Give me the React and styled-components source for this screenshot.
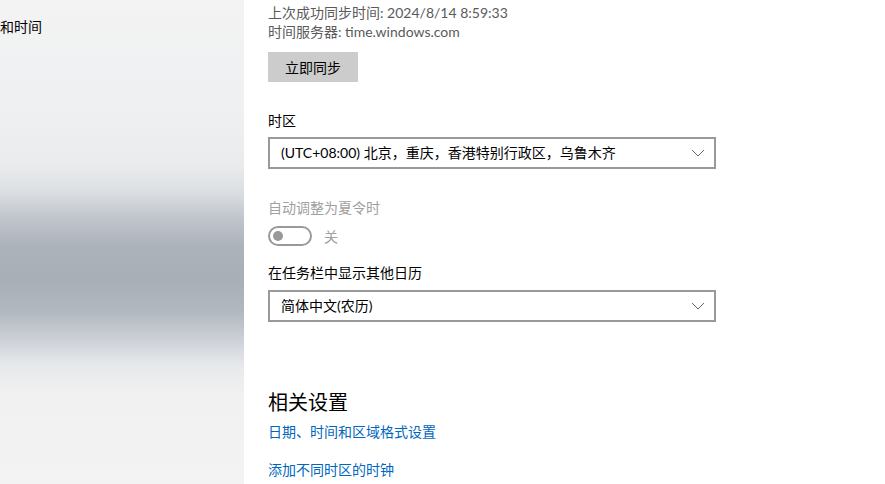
import React from 'react';
import styled, { createGlobalStyle } from 'styled-components';

const GlobalStyle = createGlobalStyle`
  html, body {
    margin: 0;
    padding: 0;
    background: #fff;
  }
  body {
    font-family: "Segoe UI", Lato, "Noto Sans CJK SC", sans-serif;
    font-size: 14px;
    color: #000;
  }
`;

const Page = styled.div`
  display: flex;
  width: 885px;
  height: 484px;
  overflow: hidden;
`;

const Sidebar = styled.aside`
  flex: 0 0 244px;
  overflow: hidden;
  background: linear-gradient(
    180deg,
    #f3f3f3 0px,
    #eef0f1 110px,
    #e9ebec 165px,
    #dcdfe2 192px,
    #c3c8ce 215px,
    #adb3bb 245px,
    #a8afb7 280px,
    #b2b8c0 312px,
    #cdd1d7 340px,
    #e6e8eb 365px,
    #f1f1f1 395px,
    #f3f3f3 484px
  );
`;

const SidebarTitle = styled.div`
  margin-top: 17px;
  line-height: 20px;
  font-size: 14px;
  white-space: nowrap;
`;

const Main = styled.main`
  flex: 1;
  padding: 3px 0 0 24px;
  display: flex;
  flex-direction: column;
  align-items: flex-start;
`;

const InfoLine = styled.div`
  line-height: 19px;
  color: #5a5a5a;
`;

const Button = styled.button`
  margin-top: 11px;
  width: 90px;
  height: 30px;
  border: none;
  background: #cccccc;
  font: inherit;
  color: #000;
  padding: 0;
`;

const Label = styled.div`
  margin-top: ${p => p.$gap}px;
  line-height: 19px;
  color: ${p => (p.$disabled ? '#a0a0a0' : '#000')};
`;

const Select = styled.div`
  margin-top: ${p => p.$gap}px;
  box-sizing: border-box;
  width: 448px;
  height: 32px;
  border: 2px solid #999;
  display: flex;
  align-items: center;
  justify-content: space-between;
  padding: 0 9px 0 11px;
`;

const SelectText = styled.span`
  line-height: 20px;
`;

const ToggleRow = styled.div`
  margin-top: 9px;
  display: flex;
  align-items: center;
  gap: 12px;
  color: #a0a0a0;
`;

const Toggle = styled.div`
  box-sizing: border-box;
  width: 44px;
  height: 20px;
  border: 2px solid #999;
  border-radius: 10px;
  display: flex;
  align-items: center;
  padding-left: 3px;

  &::before {
    content: '';
    width: 10px;
    height: 10px;
    border-radius: 50%;
    background: #999;
  }
`;

const Heading = styled.h3`
  margin: 66px 0 0;
  font-size: 20px;
  font-weight: 400;
  line-height: 28px;
`;

const Link = styled.a`
  margin-top: ${p => p.$gap}px;
  line-height: 19px;
  color: #0067c0;
  text-decoration: none;
`;

function Chevron() {
  return (
    <svg width="14" height="8" viewBox="0 0 14 8">
      <path d="M1 1 L7 7 L13 1" fill="none" stroke="#666" strokeWidth="1" />
    </svg>
  );
}

function Dropdown({ value, gap }) {
  return (
    <Select $gap={gap}>
      <SelectText>{value}</SelectText>
      <Chevron />
    </Select>
  );
}

export default function App() {
  return (
    <Page>
      <GlobalStyle />
      <Sidebar>
        <SidebarTitle>和时间</SidebarTitle>
      </Sidebar>
      <Main>
        <InfoLine>上次成功同步时间: 2024/8/14 8:59:33</InfoLine>
        <InfoLine>时间服务器: time.windows.com</InfoLine>
        <Button>立即同步</Button>

        <Label $gap={29}>时区</Label>
        <Dropdown gap={7} value="(UTC+08:00) 北京，重庆，香港特别行政区，乌鲁木齐" />

        <Label $gap={29} $disabled>自动调整为夏令时</Label>
        <ToggleRow>
          <Toggle />
          <span>关</span>
        </ToggleRow>

        <Label $gap={17}>在任务栏中显示其他日历</Label>
        <Dropdown gap={8} value="简体中文(农历)" />

        <Heading>相关设置</Heading>
        <Link href="#" $gap={6}>日期、时间和区域格式设置</Link>
        <Link href="#" $gap={19}>添加不同时区的时钟</Link>
      </Main>
    </Page>
  );
}
